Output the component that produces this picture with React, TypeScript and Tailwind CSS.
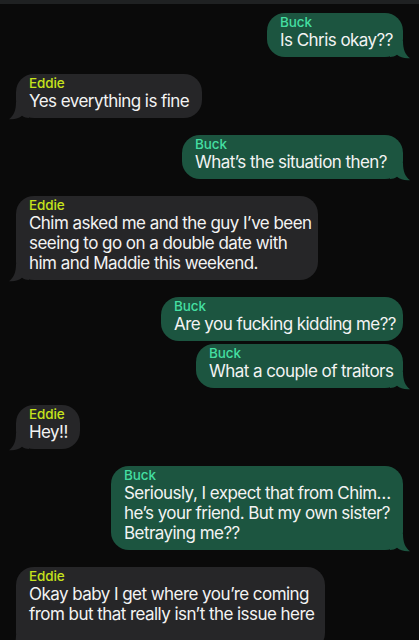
import React from 'react';

type Msg = {
  from: 'Buck' | 'Eddie';
  lines: string[];
  width: number;
  tail: boolean;
  gap: number;
};

const messages: Msg[] = [
  { from: 'Buck', lines: ['Is Chris okay??'], width: 136, tail: true, gap: 0 },
  { from: 'Eddie', lines: ['Yes everything is fine'], width: 186, tail: true, gap: 17 },
  { from: 'Buck', lines: ['What’s the situation then?'], width: 221, tail: true, gap: 17 },
  {
    from: 'Eddie',
    lines: ['Chim asked me and the guy I’ve been', 'seeing to go on a double date with', 'him and Maddie this weekend.'],
    width: 302,
    tail: true,
    gap: 17,
  },
  { from: 'Buck', lines: ['Are you fucking kidding me??'], width: 242, tail: false, gap: 17 },
  { from: 'Buck', lines: ['What a couple of traitors'], width: 207, tail: true, gap: 3 },
  { from: 'Eddie', lines: ['Hey!!'], width: 64, tail: true, gap: 17 },
  {
    from: 'Buck',
    lines: ['Seriously, I expect that from Chim…', 'he’s your friend. But my own sister?', 'Betraying me??'],
    width: 292,
    tail: true,
    gap: 17,
  },
  {
    from: 'Eddie',
    lines: ['Okay baby I get where you’re coming', 'from but that really isn’t the issue here', ''],
    width: 309,
    tail: true,
    gap: 17,
  },
];

const Tail = ({ mine }: { mine: boolean }) => (
  <svg
    viewBox="0 0 20 18"
    className={
      mine
        ? 'absolute right-[-7px] bottom-[-2px] w-[20px] h-[18px] text-[#1c5540]'
        : 'absolute left-[-7px] bottom-[-2px] w-[20px] h-[18px] -scale-x-100 text-[#262628]'
    }
  >
    <path d="M0 0 L13 0 C13 8 15 13.5 20 17.2 C14.5 17.8 10 16.2 7 13.8 C5 15.2 2.5 16 0 16 Z" fill="currentColor" />
  </svg>
);

const Bubble = ({ msg }: { msg: Msg }) => {
  const mine = msg.from === 'Buck';
  return (
    <div className={mine ? 'flex justify-end pr-[16px]' : 'flex justify-start pl-[16px]'} style={{ marginTop: msg.gap }}>
      <div
        className={`relative rounded-[18px] px-[13px] pt-[2px] pb-[7px] ${mine ? 'bg-[#1c5540]' : 'bg-[#262628]'}`}
        style={{ width: msg.width }}
      >
        {msg.tail && <Tail mine={mine} />}
        <div
          className={`relative text-[13.5px] leading-[15px] font-medium tracking-[-0.1px] ${
            mine ? 'text-[#44dfa1]' : 'text-[#c6e31c]'
          }`}
        >
          {msg.from}
        </div>
        <div className="relative text-[17px] leading-[20px] text-[#f3f3f3] whitespace-nowrap tracking-[-0.55px]">
          {msg.lines.map((l, i) => (
            <div key={i} className="h-[20px]">
              {l}
            </div>
          ))}
        </div>
      </div>
    </div>
  );
};

export default function App() {
  return (
    <div className="w-[419px] h-[640px] overflow-hidden bg-[#0a0a0a] font-['Inter','Liberation_Sans',sans-serif]">
      <div className="h-[4px] bg-[#1f2122]" />
      <div className="pt-[9px]">
        {messages.map((m, i) => (
          <Bubble key={i} msg={m} />
        ))}
      </div>
    </div>
  );
}
